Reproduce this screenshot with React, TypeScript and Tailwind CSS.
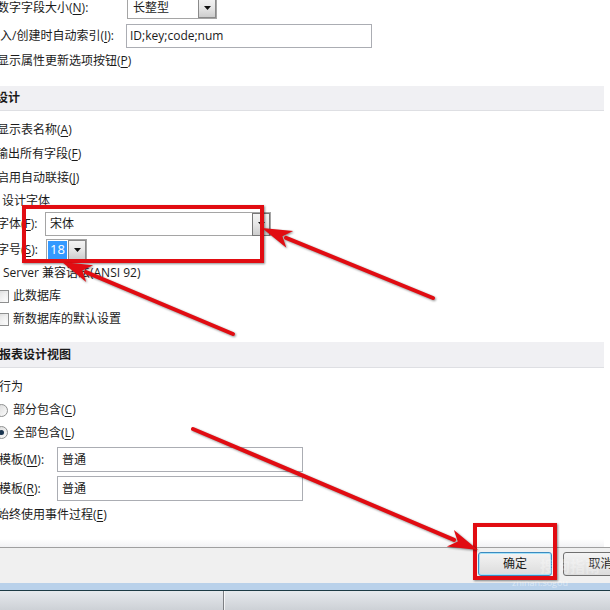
import React from "react";

const font = "font-['Open_Sans','Noto_Sans_CJK_SC',sans-serif]";

function Mn({ k }: { k: string }) {
  return (
    <>
      (<u className="underline-offset-2">{k}</u>)
    </>
  );
}

function DropBtn({ className = "" }: { className?: string }) {
  return (
    <div
      className={`flex items-center justify-center border border-[#8a8a8a] bg-gradient-to-b from-[#f4f4f4] via-[#e6e6e6] to-[#cdcdcd] ${className}`}
    >
      <svg width="7" height="4" viewBox="0 0 7 4">
        <path d="M0 0h7L3.5 4z" fill="#111" />
      </svg>
    </div>
  );
}

function Header({ title, className = "" }: { title: string; className?: string }) {
  return (
    <div
      className={`flex w-[604px] items-center border-b border-[#dedfe3] bg-[#f0f0f3] font-semibold ${className}`}
    >
      {title}
    </div>
  );
}

function Check() {
  return (
    <div className="ml-[-4px] mr-[4px] h-[13px] w-[13px] border border-[#8e8f8f] bg-gradient-to-br from-[#dcdcdc] to-[#fdfdfd] p-[2px]">
      <div className="h-full w-full bg-gradient-to-br from-[#e6e6e6] to-[#fbfbfb]" />
    </div>
  );
}

function Radio({ on }: { on?: boolean }) {
  return (
    <div className="ml-[-5px] mr-[5px] flex h-[13px] w-[13px] items-center justify-center rounded-full border border-[#8e8f8f] bg-gradient-to-br from-[#d8d8d8] to-[#fdfdfd]">
      {on && <div className="h-[5px] w-[5px] rounded-full bg-[#1a3550]" />}
    </div>
  );
}

function Arrow({ x1, y1, x2, y2 }: { x1: number; y1: number; x2: number; y2: number }) {
  const a = Math.atan2(y2 - y1, x2 - x1);
  const len = 30;
  const w = 9;
  const bx = x2 - Math.cos(a) * len;
  const by = y2 - Math.sin(a) * len;
  const px = -Math.sin(a) * w;
  const py = Math.cos(a) * w;
  return (
    <g>
      <line x1={x1} y1={y1} x2={bx + Math.cos(a) * 4} y2={by + Math.sin(a) * 4} stroke="#e10c12" strokeWidth="4" strokeLinecap="round" />
      <polygon points={`${x2},${y2} ${bx + px},${by + py} ${bx + Math.cos(a) * 8},${by + Math.sin(a) * 8} ${bx - px},${by - py}`} fill="#e10c12" />
    </g>
  );
}

export default function App() {
  return (
    <div className={`relative h-[610px] w-[610px] overflow-hidden bg-white text-[12px] text-[#1b1b1b] ${font}`}>
      {/* dialog body */}
      <div className="flex h-[547px] flex-col">
        <div className="mt-[-3px] flex h-[22px] items-center">
          <div className="ml-[-3px] w-[130px] shrink-0">
            数字字段大小<Mn k="N" />:
          </div>
          <div className="flex h-full w-[90px] items-center border border-[#a5a5a5] pl-[5px]">
            <span className="flex-1">长整型</span>
            <DropBtn className="h-full w-[18px]" />
          </div>
        </div>
        <div className="mt-[5px] flex h-[24px] items-center">
          <div className="w-[126px] shrink-0">
            入/创建时自动索引<Mn k="I" />:
          </div>
          <div className="flex h-full w-[246px] items-center border border-[#abadb3] pl-[3px]">ID;key;code;num</div>
        </div>
        <div className="ml-[-3px] flex h-[26px] items-center">
          显示属性更新选项按钮<Mn k="P" />
        </div>

        <Header title="设计" className="mt-[12px] h-[25px] [text-indent:-4px]" />

        <div className="ml-[-3px] mt-[7px] flex h-[24px] items-center">
          显示表名称<Mn k="A" />
        </div>
        <div className="ml-[-4px] flex h-[24px] items-center">
          输出所有字段<Mn k="F" />
        </div>
        <div className="ml-[-3px] flex h-[24px] items-center">
          启用自动联接<Mn k="J" />
        </div>
        <div className="ml-[2px] flex h-[22px] items-center">设计字体</div>
        <div className="flex h-[24px] items-center">
          <div className="ml-[-3px] w-[48px] shrink-0">
            字体<Mn k="F" />:
          </div>
          <div className="flex h-full w-[226px] items-center border border-[#a5a5a5] pl-[4px]">
            <span className="flex-1">宋体</span>
            <DropBtn className="h-[23px] w-[18px] border-[#777]" />
          </div>
        </div>
        <div className="mt-[3px] flex h-[22px] items-center">
          <div className="ml-[-3px] w-[49px] shrink-0">
            字号<Mn k="S" />:
          </div>
          <div className="flex h-full w-[41px] items-center border border-[#a5a5a5] pl-[1px]">
            <span className="flex h-[18px] w-[19px] items-center justify-center bg-[#3399ff] text-[13px] text-white">18</span>
            <DropBtn className="ml-auto h-full w-[18px]" />
          </div>
        </div>
        <div className="ml-[3px] flex h-[24px] items-center">Server 兼容语法(ANSI 92)</div>
        <div className="flex h-[22px] items-center">
          <Check />
          此数据库
        </div>
        <div className="flex h-[24px] items-center">
          <Check />
          新数据库的默认设置
        </div>

        <Header title="报表设计视图" className="mt-[11px] h-[26px] [text-indent:-1px]" />

        <div className="ml-[-1px] mt-[7px] flex h-[24px] items-center">行为</div>
        <div className="flex h-[22px] items-center">
          <Radio />
          部分包含<Mn k="C" />
        </div>
        <div className="flex h-[23px] items-center">
          <Radio on />
          全部包含<Mn k="L" />
        </div>
        <div className="mt-[3px] flex h-[25px] items-center">
          <div className="ml-[-1px] w-[58px] shrink-0">
            模板<Mn k="M" />:
          </div>
          <div className="flex h-full w-[246px] items-center border border-[#abadb3] pl-[4px]">普通</div>
        </div>
        <div className="mt-[4px] flex h-[25px] items-center">
          <div className="ml-[-1px] w-[58px] shrink-0">
            模板<Mn k="R" />:
          </div>
          <div className="flex h-full w-[246px] items-center border border-[#abadb3] pl-[4px]">普通</div>
        </div>
        <div className="ml-[-3px] mt-[1px] flex h-[26px] items-center">
          始终使用事件过程<Mn k="E" />
        </div>
        <div className="flex-1" />
        <div className="h-[8px] w-[604px] bg-gradient-to-b from-white to-[#f2f2f4]" />
      </div>

      {/* button bar */}
      <div className="flex h-[36px] justify-end gap-[11px] border-t border-[#a0a0a0] bg-[#f0f0f0] pt-[4px]">
        <div className="flex h-[24px] w-[74px] items-center justify-center rounded-[3px] border border-[#3c8bc0] bg-gradient-to-b from-[#f4f4f4] to-[#dcdcdc] shadow-[inset_0_0_0_1px_#a6e2f8]">
          确定
        </div>
        <div className="mr-[-28px] flex h-[24px] w-[75px] items-center justify-center rounded-[3px] border border-[#707070] bg-gradient-to-b from-[#f4f4f4] to-[#dcdcdc]">
          取消
        </div>
      </div>
      <div className="h-[7px] bg-[#b9d1ea]" />
      <div className="h-[1px] bg-[#1b3a44]" />
      <div className="flex h-[19px] bg-gradient-to-b from-[#e6e9ed] to-[#cdd1d6]">
        <div className="w-[224px] border-r border-[#7d7f83]" />
        <div className="w-[1px] bg-white/70" />
      </div>

      {/* watermark */}
      <div className="pointer-events-none absolute left-[540px] top-[555px] text-[15px] font-bold text-white/30">搜狗指南</div>
      <div className="pointer-events-none absolute left-[512px] top-[576px] text-[9px] text-white/50">zhinan.sogou</div>

      {/* annotations */}
      <div className="pointer-events-none absolute left-[22px] top-[205px] h-[58px] w-[242px] border-4 border-[#e10c12] shadow-[1px_1px_2px_rgba(0,0,0,0.45)]" />
      <div className="pointer-events-none absolute left-[473px] top-[523px] h-[57px] w-[84px] border-4 border-[#e10c12] shadow-[1px_1px_2px_rgba(0,0,0,0.45)]" />
      <svg className="pointer-events-none absolute left-0 top-0 drop-shadow-[1px_1px_1px_rgba(0,0,0,0.45)]" width="610" height="610">
        <Arrow x1={433} y1={298} x2={262} y2={228} />
        <Arrow x1={233} y1={334} x2={62} y2={262} />
        <Arrow x1={193} y1={429} x2={478} y2={550} />
      </svg>
    </div>
  );
}
